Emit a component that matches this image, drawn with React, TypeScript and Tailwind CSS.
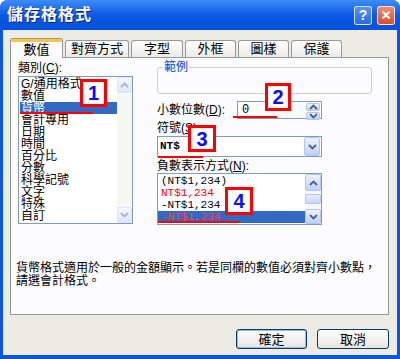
import React from 'react';

const font = "font-['Liberation_Sans','Noto_Sans_CJK_TC',sans-serif]";

const Arrow = ({ dir, color = '#4d6185' }: { dir: 'up' | 'down'; color?: string }) => (
  <svg width="9" height="6" viewBox="0 0 9 6">
    <path
      d={dir === 'up' ? 'M1 5 L4.5 1.5 L8 5' : 'M1 1 L4.5 4.5 L8 1'}
      fill="none"
      stroke={color}
      strokeWidth="1.8"
    />
  </svg>
);

const ScrollBtn = ({ dir, pale = false, className = '' }: { dir: 'up' | 'down'; pale?: boolean; className?: string }) => (
  <div
    className={`flex items-center justify-center rounded-[2px] border ${
      pale
        ? 'border-[#dfe6f7] bg-linear-to-b from-[#f4f7fe] to-[#dde6fb]'
        : 'border-[#b4c6ef] bg-linear-to-b from-[#eef3fe] to-[#bfd1f7]'
    } ${className}`}
  >
    <Arrow dir={dir} color={pale ? '#a9b6d3' : '#4d6185'} />
  </div>
);

const Tab = ({ label, w, active = false }: { label: string; w: string; active?: boolean }) =>
  active ? (
    <div className={`relative z-10 -mb-px flex h-[20px] ${w} flex-col rounded-t-[3px] border border-b-0 border-[#919b9c] bg-[#fcfcfe]`}>
      <div className="h-[3px] rounded-t-[2px] bg-[#ffc83c]" />
      <div className="flex flex-1 items-center justify-center text-[13px] leading-[14px] text-black">{label}</div>
    </div>
  ) : (
    <div className={`flex h-[17px] ${w} items-center justify-center rounded-t-[3px] border border-b-0 border-[#919b9c] bg-linear-to-b from-[#ffffff] to-[#ecebe6] text-[13px] leading-[14px] text-black`}>
      {label}
    </div>
  );

const Mark = ({ n, className }: { n: string; className: string }) => (
  <div
    className={`absolute flex items-center justify-center border-[3px] border-[#ff0000] bg-white font-['Liberation_Sans',sans-serif] text-[20px] font-bold leading-none text-[#0a0aff] ${className}`}
  >
    {n}
  </div>
);

const Underline = ({ className }: { className: string }) => (
  <div className={`absolute h-[2px] bg-[#ff0000] ${className}`} />
);

const categories = ['G/通用格式', '數值', '貨幣', '會計專用', '日期', '時間', '百分比', '分數', '科學記號', '文字', '特殊', '自訂'];

export default function App() {
  return (
    <div className={`relative h-[359px] w-[400px] overflow-hidden bg-white ${font}`}>
      <div className="flex h-full flex-col rounded-t-[8px] bg-[#0a56e2]">
        {/* title bar */}
        <div className="flex h-[30px] items-center rounded-t-[8px] bg-linear-to-b from-[#3d8cf7] via-[#0a5ae6] to-[#0450da] pl-[7px] pr-[5px]">
          <span className="text-[16px] font-bold leading-none tracking-[1px] text-white [text-shadow:1px_1px_0_#0a1f7a]">儲存格格式</span>
          <div className="ml-auto flex gap-[5px]">
            <div className="flex h-[19px] w-[18px] items-center justify-center rounded-[3px] border border-white/80 bg-linear-to-b from-[#5a93f5] to-[#2c66e0] font-['Liberation_Sans',sans-serif] text-[14px] font-bold text-white">
              ?
            </div>
            <div className="flex h-[19px] w-[18px] items-center justify-center rounded-[3px] border border-white/80 bg-linear-to-b from-[#ef8a6a] to-[#dd4b22]">
              <svg width="10" height="10" viewBox="0 0 10 10">
                <path d="M1.5 1.5 L8.5 8.5 M8.5 1.5 L1.5 8.5" stroke="white" strokeWidth="2.2" />
              </svg>
            </div>
          </div>
        </div>

        {/* body */}
        <div className="mx-[3px] mb-[4px] flex flex-1 flex-col bg-[#ecebe4] pl-[7px] pr-[8px] pt-[8px]">
          <div className="flex items-end gap-[2px]">
            <Tab label="數值" w="w-[53px]" active />
            <Tab label="對齊方式" w="w-[64px]" />
            <Tab label="字型" w="w-[52px]" />
            <Tab label="外框" w="w-[51px]" />
            <Tab label="圖樣" w="w-[51px]" />
            <Tab label="保護" w="w-[51px]" />
          </div>

          {/* panel */}
          <div className="flex h-[258px] flex-col border border-[#919b9c] bg-[#fcfcfe] text-[12px] text-black">
            <div className="flex pl-[7px]">
              {/* left column */}
              <div className="flex w-[115px] flex-col pt-[3px]">
                <div className="h-[15px] leading-[15px]">
                  類別(<span className="underline">C</span>):
                </div>
                <div className="flex h-[148px] border border-[#7f9db9] bg-white">
                  <div className="flex flex-1 flex-col pl-px pt-[1px] text-[12px] leading-[12px]">
                    {categories.map((c) => (
                      <div
                        key={c}
                        className={`h-[12px] whitespace-nowrap pl-[1px] ${c === '貨幣' ? 'bg-[#316ac5] text-white' : ''}`}
                      >
                        {c}
                      </div>
                    ))}
                  </div>
                  <div className="flex w-[15px] flex-col justify-between bg-[#f7f7f4]">
                    <ScrollBtn dir="up" pale className="h-[16px]" />
                    <ScrollBtn dir="down" pale className="h-[16px]" />
                  </div>
                </div>
              </div>

              {/* right column */}
              <div className="ml-[24px] flex w-[215px] flex-col">
                <div className="relative mt-[9px] h-[27px] rounded-[3px] border border-[#d0d0bf]">
                  <span className="absolute -top-[8px] left-[5px] bg-[#fcfcfe] px-px leading-[14px] text-[#0046d5]">範例</span>
                </div>

                <div className="mt-[7px] flex h-[18px] items-center">
                  <div className="w-[80px] leading-[14px]">
                    小數位數(<span className="underline">D</span>):
                  </div>
                  <div className="flex h-[18px] w-[85px] items-center border border-[#7f9db9] bg-white">
                    <span className="flex-1 pl-[4px] font-['Liberation_Mono',monospace] text-[12px] leading-none">0</span>
                    <div className="flex h-full w-[16px] flex-col gap-px p-px">
                      <ScrollBtn dir="up" className="flex-1" />
                      <ScrollBtn dir="down" className="flex-1" />
                    </div>
                  </div>
                </div>

                <div className="mt-[2px] h-[15px] leading-[15px]">
                  符號(<span className="underline">S</span>):
                </div>
                <div className="flex h-[21px] w-[165px] items-center border border-[#7f9db9] bg-white">
                  <span className="flex-1 pl-[2px] font-['Liberation_Mono',monospace] text-[11px] font-bold leading-none">NT$</span>
                  <ScrollBtn dir="down" className="mr-px h-[19px] w-[16px]" />
                </div>

                <div className="mt-[2px] h-[14px] leading-[14px]">
                  負數表示方式(<span className="underline">N</span>):
                </div>
                <div className="flex h-[52px] w-[165px] border border-[#7f9db9] bg-white">
                  <div className="flex flex-1 flex-col pt-[1px] font-['Liberation_Mono',monospace] text-[11px] leading-[12px]">
                    <div className="h-[12px] pl-[3px]">(NT$1,234)</div>
                    <div className="h-[12px] pl-[3px] text-[#ff0000]">NT$1,234</div>
                    <div className="h-[12px] pl-[3px]">-NT$1,234</div>
                    <div className="h-[12px] bg-[#316ac5] pl-[3px] text-[#ff3b3b]">-NT$1,234</div>
                  </div>
                  <div className="flex w-[16px] flex-col bg-[#f7f7f4]">
                    <ScrollBtn dir="up" className="h-[17px]" />
                    <div className="mt-[3px] h-[10px] rounded-[2px] border border-[#b4c6ef] bg-linear-to-b from-[#e6eefd] to-[#c6d6f8]" />
                    <ScrollBtn dir="down" className="mt-auto h-[15px]" />
                  </div>
                </div>
              </div>
            </div>

            <p className="mt-[37px] pl-[5px] text-[12px] leading-[13px]">
              貨幣格式適用於一般的金額顯示。若是同欄的數值必須對齊小數點，
              <br />
              請選會計格式。
            </p>
          </div>

          {/* buttons */}
          <div className="mt-[14px] flex justify-end gap-[10px]">
            <button className="flex h-[20px] w-[71px] items-center justify-center rounded-[3px] border border-[#003c74] bg-linear-to-b from-[#ffffff] to-[#e6e5df] text-[13px] leading-none text-black shadow-[inset_0_0_0_1px_#9ab8f3]">
              確定
            </button>
            <button className="flex h-[20px] w-[72px] items-center justify-center rounded-[3px] border border-[#003c74] bg-linear-to-b from-[#ffffff] to-[#e6e5df] text-[13px] leading-none text-black">
              取消
            </button>
          </div>
        </div>
      </div>

      {/* annotations */}
      <Underline className="left-[20px] top-[112px] w-[73px]" />
      <Underline className="left-[233px] top-[116px] w-[44px]" />
      <Underline className="left-[158px] top-[156px] w-[45px]" />
      <Underline className="left-[158px] top-[221px] w-[82px]" />
      <Mark n="1" className="left-[80px] top-[79px] h-[28px] w-[27px]" />
      <Mark n="2" className="left-[265px] top-[83px] h-[28px] w-[26px]" />
      <Mark n="3" className="left-[188px] top-[125px] h-[27px] w-[28px]" />
      <Mark n="4" className="left-[225px] top-[187px] h-[28px] w-[28px]" />
    </div>
  );
}
